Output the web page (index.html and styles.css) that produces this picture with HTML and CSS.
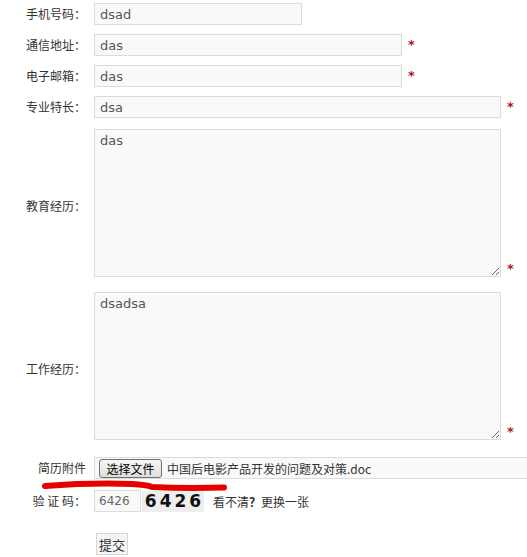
FILE: index.html
```html
<!DOCTYPE html>
<html>
<head>
<meta charset="utf-8">
<link rel="stylesheet" href="styles.css">
</head>
<body>
<form class="form">
  <div class="row r1">
    <label class="label">手机号码：</label>
    <input class="field w-s" type="text" value="dsad">
  </div>
  <div class="row r2">
    <label class="label">通信地址：</label>
    <input class="field w-m" type="text" value="das">
    <span class="req">*</span>
  </div>
  <div class="row r2">
    <label class="label">电子邮箱：</label>
    <input class="field w-m" type="text" value="das">
    <span class="req">*</span>
  </div>
  <div class="row r2">
    <label class="label">专业特长：</label>
    <input class="field w-l" type="text" value="dsa">
    <span class="req">*</span>
  </div>
  <div class="row tarow t1">
    <label class="label tlabel">教育经历：</label>
    <textarea class="area w-l">das</textarea>
    <span class="req req-bottom">*</span>
  </div>
  <div class="row tarow t2">
    <label class="label tlabel">工作经历：</label>
    <textarea class="area w-l">dsadsa</textarea>
    <span class="req req-bottom">*</span>
  </div>
  <div class="row r-file">
    <label class="label">简历附件</label>
    <div class="filebox">
      <span class="filebtn">选择文件</span>
      <span class="filename">中国后电影产品开发的问题及对策.doc</span>
    </div>
  </div>
  <div class="row r-code">
    <label class="label">验 证 码：</label>
    <input class="field w-code" type="text" value="6426">
    <span class="captcha">6426</span>
    <span class="refresh">看不清<b>？</b>更换一张</span>
  </div>
  <div class="row r-submit">
    <span class="label"></span>
    <span class="submit">提交</span>
  </div>
  <svg class="scribble" width="200" height="14" viewBox="0 0 200 14">
    <path d="M3 6 C 30 4, 60 3, 90 4 C 100 4.5, 105 5, 110 7 C 140 8.5, 165 8, 182 7.5" fill="none" stroke="#e60000" stroke-width="6" stroke-linecap="round"/>
  </svg>
</form>
</body>
</html>
```

FILE: styles.css
```css
html, body {
  margin: 0;
  padding: 0;
  background: #fff;
  overflow: hidden;
}
body {
  font-family: "Noto Sans CJK SC", "DejaVu Sans", sans-serif;
  font-size: 12px;
  color: #333;
}
.form {
  position: relative;
  padding-top: 3px;
}
.row {
  display: flex;
  align-items: center;
}
.r2 { margin-top: 9px; }
.t1 { margin-top: 11px; }
.t2 { margin-top: 15px; }
.r-file { margin-top: 17px; }
.r-code { margin-top: 11px; }
.r-submit { margin-top: 21px; }

.label {
  flex: none;
  width: 86px;
  margin-right: 8px;
  text-align: right;
  white-space: pre;
  font-size: 12px;
  line-height: 16px;
  color: #333;
}
.tlabel { padding-top: 6px; }

.field {
  box-sizing: border-box;
  height: 22px;
  margin: 0;
  padding: 0 5px;
  border: 1px solid #dcdcdc;
  background: #f9f9f9;
  font-family: "DejaVu Sans", sans-serif;
  font-size: 13px;
  color: #555;
  outline: none;
}
.w-s { width: 208px; }
.w-m { width: 308px; }
.w-l { width: 407px; }
.w-code { width: 47px; height: 22px; font-size: 12px; color: #666; padding: 0 4px; }

.area {
  box-sizing: border-box;
  height: 148px;
  margin: 0;
  padding: 3px 5px;
  border: 1px solid #dcdcdc;
  background: #f9f9f9;
  font-family: "DejaVu Sans", sans-serif;
  font-size: 13px;
  color: #555;
  outline: none;
}

.req {
  margin-left: 6px;
  color: #b3112a;
  font-family: "DejaVu Sans", sans-serif;
  font-size: 13px;
  font-weight: bold;
  line-height: 14px;
}
.req-bottom {
  align-self: flex-end;
  margin-bottom: 1px;
}

.filebox {
  box-sizing: border-box;
  display: flex;
  align-items: center;
  width: 450px;
  height: 22px;
  border: 1px solid #dcdcdc;
  border-right: none;
  background: #f9f9f9;
  padding-left: 4px;
}
.filebtn {
  box-sizing: border-box;
  display: flex;
  align-items: center;
  justify-content: center;
  width: 63px;
  height: 19px;
  border: 1px solid #707070;
  border-radius: 3px;
  background: linear-gradient(#f6f6f6, #dedede);
  color: #000;
  font-size: 12px;
}
.filename {
  margin-left: 5px;
  font-size: 12px;
  color: #333;
  white-space: nowrap;
}

.captcha {
  box-sizing: border-box;
  display: flex;
  align-items: center;
  justify-content: center;
  width: 62px;
  height: 21px;
  margin-left: 1px;
  background: #eeeeee;
  font-family: "DejaVu Sans", sans-serif;
  font-weight: bold;
  font-size: 17px;
  letter-spacing: 3px;
  padding-left: 3px;
  color: #111;
}
.refresh {
  margin-left: 9px;
  font-size: 12px;
  color: #333;
}
.refresh b { font-weight: bold; }

.submit {
  box-sizing: border-box;
  display: flex;
  align-items: center;
  justify-content: center;
  width: 32px;
  height: 22px;
  margin-left: 2px;
  border: 1px solid #d6d6d6;
  background: #f4f4f4;
  font-size: 13px;
  color: #333;
}

.scribble {
  position: absolute;
  left: 42px;
  top: 480px;
}
```
